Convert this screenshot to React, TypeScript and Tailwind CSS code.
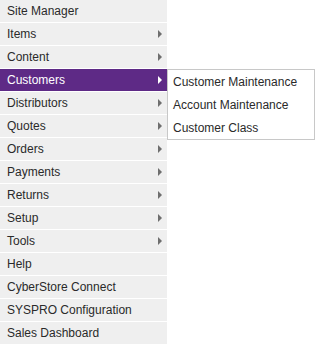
import React from "react";

const items: { label: string; arrow?: boolean; active?: boolean }[] = [
  { label: "Site Manager" },
  { label: "Items", arrow: true },
  { label: "Content", arrow: true },
  { label: "Customers", arrow: true, active: true },
  { label: "Distributors", arrow: true },
  { label: "Quotes", arrow: true },
  { label: "Orders", arrow: true },
  { label: "Payments", arrow: true },
  { label: "Returns", arrow: true },
  { label: "Setup", arrow: true },
  { label: "Tools", arrow: true },
  { label: "Help" },
  { label: "CyberStore Connect" },
  { label: "SYSPRO Configuration" },
  { label: "Sales Dashboard" },
];

const sub = ["Customer Maintenance", "Account Maintenance", "Customer Class"];

export default function App() {
  return (
    <div
      className="relative w-[315px] h-[344px] bg-white overflow-hidden"
      style={{ fontFamily: '"Liberation Sans", Arial, sans-serif' }}
    >
      <ul className="w-[167px] flex flex-col">
        {items.map((it) => (
          <li
            key={it.label}
            className={`relative h-[23px] border-b border-white flex items-center pl-[7px] text-[12px] ${
              it.active ? "bg-[#5e2a86] text-white" : "bg-[#efefef] text-[#2a2a2a]"
            }`}
          >
            <span>{it.label}</span>
            {it.arrow && (
              <span
                className={`absolute left-[158px] top-[7px] w-0 h-0 border-y-[4px] border-y-transparent border-l-[4px] ${
                  it.active ? "border-l-white" : "border-l-[#6e6e6e]"
                }`}
              />
            )}
          </li>
        ))}
      </ul>
      <ul className="absolute left-[167px] top-[69px] w-[148px] bg-white border border-[#c8c8c8] flex flex-col">
        {sub.map((s) => (
          <li
            key={s}
            className="h-[23px] flex items-center pl-[5px] text-[12px] text-[#2a2a2a]"
          >
            {s}
          </li>
        ))}
      </ul>
    </div>
  );
}
